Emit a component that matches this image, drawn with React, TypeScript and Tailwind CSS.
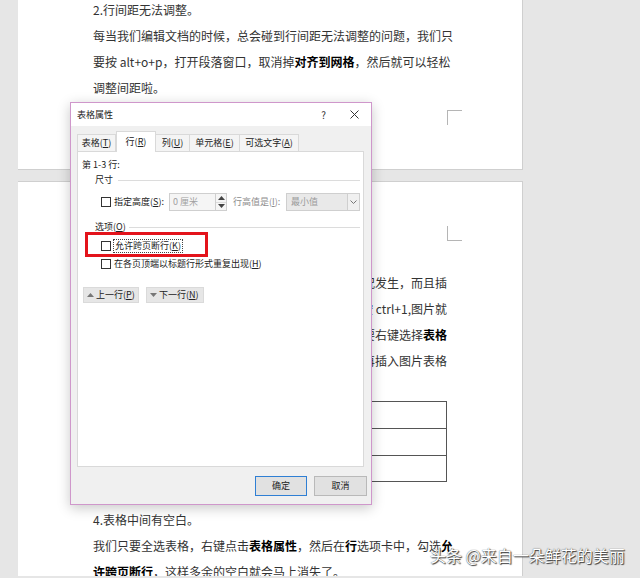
import React from "react";

function Check() {
  return <span className="inline-block w-[10px] h-[10px] border border-[#333] bg-white shrink-0" />;
}

function Tri({ up, color = "#777" }: { up?: boolean; color?: string }) {
  return (
    <svg width="7" height="4" viewBox="0 0 7 4" className="shrink-0">
      {up ? <polygon points="0,4 7,4 3.5,0" fill={color} /> : <polygon points="0,0 7,0 3.5,4" fill={color} />}
    </svg>
  );
}

export default function App() {
  return (
    <div className="relative w-[640px] h-[578px] overflow-hidden bg-[#e6e6e6] font-['Noto_Sans_CJK_SC','Noto_Sans',sans-serif]">
      {/* page 1 */}
      <div className="ml-[18px] w-[505px] h-[170px] bg-white border-r border-b border-[#cfcfcf] overflow-hidden">
        <div className="-mt-[3px] pl-[75px] text-[12px] leading-[26px] text-[#333]">
          <div>2.行间距无法调整。</div>
          <div className="w-[354px] whitespace-nowrap text-justify [text-align-last:justify]">每当我们编辑文档的时候，总会碰到行间距无法调整的问题，我们只</div>
          <div className="w-[354px] whitespace-nowrap text-justify [text-align-last:justify]">
            要按 alt+o+p，打开段落窗口，取消掉<b className="text-black">对齐到网格</b>，然后就可以轻松
          </div>
          <div>调整间距啦。</div>
        </div>
        <div className="ml-[429px] mt-[9px] w-[15px] h-[15px] border-l border-t border-[#b5b5b5]" />
      </div>

      {/* page 2 */}
      <div className="mt-[11px] ml-[18px] w-[505px] h-[395px] bg-white border-r border-t border-[#cfcfcf] overflow-hidden">
        <div className="ml-[429px] mt-[44px] w-[15px] h-[15px] border-l border-b border-[#b5b5b5]" />
        <div className="mt-[29px] ml-[75px] w-[354px] text-[12px] leading-[26px] text-[#333]">
          <div className="whitespace-nowrap overflow-hidden text-right">插入图片的时候，经常会遇到图片显示不全的情况发生，而且插</div>
          <div className="whitespace-nowrap overflow-hidden text-right">入的图片也会变形，这时候我们只需要按 ctrl+1,图片就</div>
          <div className="whitespace-nowrap overflow-hidden text-right">
            会恢复正常了。如果想要图片整齐排列，只需要右键选择<b className="text-black">表格</b>
          </div>
          <div className="whitespace-nowrap overflow-hidden text-right">属性，设置好单元格的大小，然后再插入图片表格</div>
        </div>
        <div className="mt-[27px] ml-[75px] w-[354px] border-l border-r border-b border-[#555]">
          <div className="h-[27px] border-t border-[#555]" />
          <div className="h-[27px] border-t border-[#555]" />
          <div className="h-[26px] border-t border-[#555]" />
        </div>
        <div className="mt-[25px] ml-[75px] w-[354px] text-[12px] leading-[26px] text-[#333]">
          <div>4.表格中间有空白。</div>
          <div className="whitespace-nowrap text-justify [text-align-last:justify]">
            我们只要全选表格，右键点击<b className="text-black">表格属性</b>，然后在<b className="text-black">行</b>选项卡中，勾选<b className="text-black">允</b>
          </div>
          <div className="whitespace-nowrap">
            <b className="text-black">许跨页断行</b>，这样多余的空白就会马上消失了。
          </div>
        </div>
      </div>

      {/* dialog */}
      <div className="absolute left-[70px] top-[102px] w-[302px] h-[403px] border border-[#cf97cb] bg-[#f0f0f0] shadow-[0_3px_12px_rgba(0,0,0,0.22)] text-[9px] text-[#222]">
        <div className="h-[23px] bg-white flex items-center pl-[6px]">
          <span>表格属性</span>
          <span className="ml-auto text-[10px] text-[#333]">?</span>
          <svg width="9" height="9" viewBox="0 0 9 9" className="ml-[24px] mr-[12px]">
            <path d="M0.5 0.5 L8.5 8.5 M8.5 0.5 L0.5 8.5" stroke="#333" strokeWidth="1" />
          </svg>
        </div>

        <div className="h-[25px] flex items-end pl-[6px]">
          <div className="w-[39px] h-[17px] flex items-center justify-center bg-[#f4f4f4] border border-b-0 border-[#d9d9d9]">
            <span>表格(<u>T</u>)</span>
          </div>
          <div className="relative z-10 -mb-px w-[40px] h-[21px] flex items-center justify-center bg-white border border-b-0 border-[#d9d9d9]">
            <span>行(<u>R</u>)</span>
          </div>
          <div className="w-[34px] h-[17px] flex items-center justify-center bg-[#f4f4f4] border border-l-0 border-b-0 border-[#d9d9d9]">
            <span>列(<u>U</u>)</span>
          </div>
          <div className="w-[50px] h-[17px] flex items-center justify-center bg-[#f4f4f4] border border-l-0 border-b-0 border-[#d9d9d9]">
            <span>单元格(<u>E</u>)</span>
          </div>
          <div className="w-[59px] h-[17px] flex items-center justify-center bg-[#f4f4f4] border border-l-0 border-b-0 border-[#d9d9d9]">
            <span>可选文字(<u>A</u>)</span>
          </div>
        </div>

        <div className="relative ml-[6px] w-[287px] h-[316px] bg-white border border-[#d9d9d9]">
          <div className="mt-[6px] ml-[4px] h-[14px] leading-[14px]">第 1-3 行:</div>
          <div className="mt-[1px] ml-[17px] mr-[3px] h-[14px] flex items-center">
            <span className="leading-[14px]">尺寸</span>
            <span className="ml-[5px] flex-1 h-px bg-[#dcdcdc]" />
          </div>
          <div className="mt-[6px] ml-[23px] h-[18px] flex items-center">
            <Check />
            <span className="ml-[3px] w-[55px] whitespace-nowrap">
              指定高度(<u>S</u>):
            </span>
            <div className="w-[47px] h-[18px] border border-[#cfcfcf] bg-[#f5f5f5] text-[#a0a0a0] flex items-center pl-[3px]">0 厘米</div>
            <div className="w-[11px] h-[18px] border border-l-0 border-[#cfcfcf] bg-[#f5f5f5] flex flex-col">
              <div className="flex-1 flex items-center justify-center border-b border-[#dcdcdc]">
                <Tri up color="#444" />
              </div>
              <div className="flex-1 flex items-center justify-center">
                <Tri color="#444" />
              </div>
            </div>
            <span className="ml-[6px] w-[53px] whitespace-nowrap text-[#8c8c8c]">
              行高值是(<u>I</u>):
            </span>
            <div className="w-[74px] h-[18px] border border-[#cfcfcf] bg-[#e9e9e9] text-[#9a9a9a] flex items-center">
              <span className="pl-[4px] flex-1">最小值</span>
              <div className="w-[12px] h-full border-l border-[#cfcfcf] bg-[#f0f0f0] flex items-center justify-center">
                <svg width="7" height="4" viewBox="0 0 7 4">
                  <polyline points="0.5,0.5 3.5,3.5 6.5,0.5" fill="none" stroke="#777" strokeWidth="1" />
                </svg>
              </div>
            </div>
          </div>
          <div className="mt-[9px] ml-[17px] mr-[3px] h-[14px] flex items-center">
            <span className="leading-[14px]">
              选项(<u>O</u>)
            </span>
            <span className="ml-[3px] flex-1 h-px bg-[#dcdcdc]" />
          </div>
          <div className="mt-[5px] ml-[23px] h-[14px] flex items-center">
            <Check />
            <span className="ml-[2px] px-[1px] leading-[12px] border border-dotted border-[#444]">
              允许跨页断行(<u>K</u>)
            </span>
          </div>
          <div className="mt-[4px] ml-[23px] h-[14px] flex items-center">
            <Check />
            <span className="ml-[3px]">
              在各页顶端以标题行形式重复出现(<u>H</u>)
            </span>
          </div>
          <div className="mt-[16px] ml-[5px] flex gap-[7px]">
            <div className="w-[56px] h-[16px] bg-[#e6e6e6] border border-[#dadada] flex items-center pl-[3px] gap-[2px] whitespace-nowrap">
              <Tri up />
              <span>上一行(<u>P</u>)</span>
            </div>
            <div className="w-[58px] h-[16px] bg-[#e6e6e6] border border-[#dadada] flex items-center pl-[3px] gap-[2px] whitespace-nowrap">
              <Tri />
              <span>下一行(<u>N</u>)</span>
            </div>
          </div>
          <div className="absolute left-[7px] top-[80px] w-[123px] h-[25px] border-[3px] border-[#e3131b]" />
        </div>

        <div className="mt-[9px] pr-[4px] flex justify-end gap-[7px]">
          <div className="w-[52px] h-[20px] border border-[#2f7fd4] bg-[#e1e1e1] flex items-center justify-center">确定</div>
          <div className="w-[53px] h-[20px] border border-[#b9b9b9] bg-[#e1e1e1] flex items-center justify-center">取消</div>
        </div>
      </div>

      {/* watermark */}
      <div className="absolute left-[430px] top-[544px] text-[16px] leading-[22px] text-white whitespace-nowrap [text-shadow:1px_1px_1px_#3a3a3a,0_0_1px_#3a3a3a]">
        头条 @来自一朵鲜花的美丽
      </div>
    </div>
  );
}
